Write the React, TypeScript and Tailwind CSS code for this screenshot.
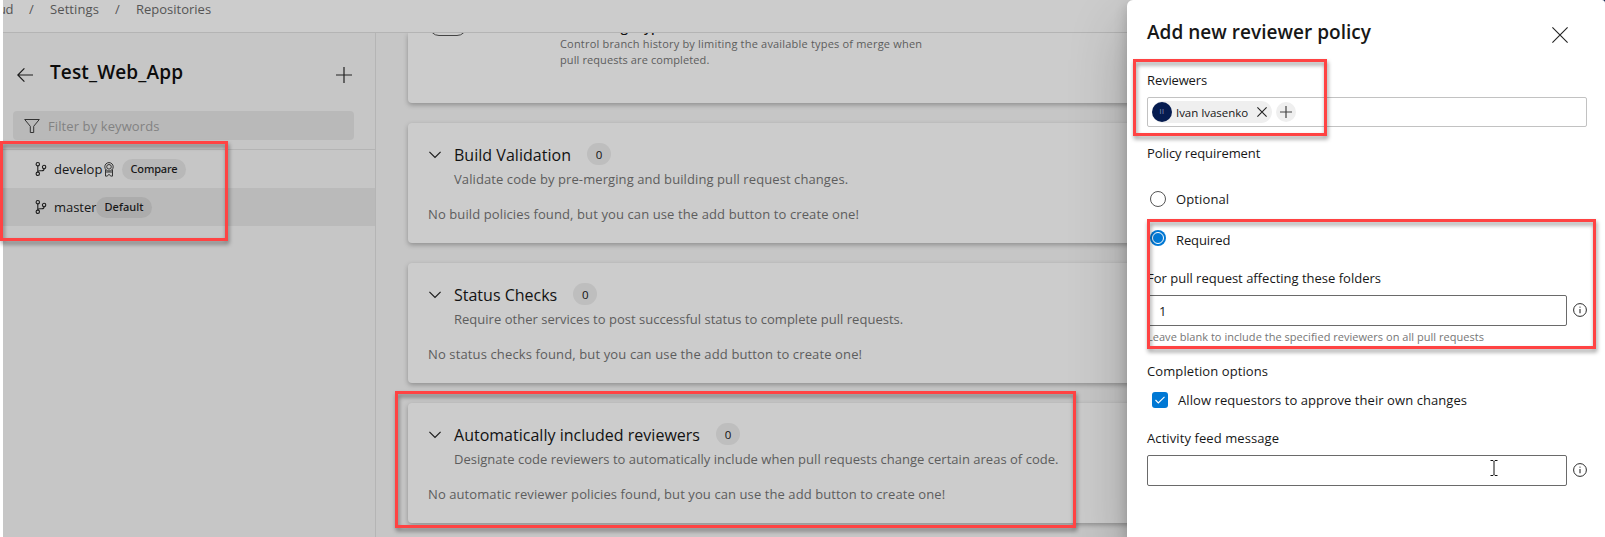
import type { ReactNode } from "react";

function BranchIcon() {
  return (
    <svg width="12" height="16" viewBox="0 0 12 16" fill="none" stroke="#1c1c1c" strokeWidth="1.1" className="shrink-0">
      <circle cx="2.8" cy="3.2" r="1.7" />
      <circle cx="2.8" cy="12.8" r="1.7" />
      <circle cx="9.1" cy="6" r="1.7" />
      <path d="M2.8 4.9v6.2M9.1 7.7c0 1.5-.8 2-2.2 2H4.8c-1.2 0-2 .5-2 1.4" />
    </svg>
  );
}

function RibbonIcon() {
  return (
    <svg width="10" height="15" viewBox="0 0 10 15" fill="none" stroke="#333" strokeWidth="1" className="shrink-0">
      <circle cx="5" cy="4.8" r="4.2" />
      <circle cx="5" cy="4.8" r="2.3" />
      <path d="M1.5 7.5v6.6h1.6L5 12.4l1.9 1.7h1.6V7.5M1.5 10h7" />
    </svg>
  );
}

function PlusIcon({ size, color }: { size: number; color: string }) {
  return (
    <svg width={size} height={size} viewBox={`0 0 ${size} ${size}`} stroke={color} strokeWidth="1.2" className="shrink-0">
      <path d={`M0 ${size / 2}H${size}M${size / 2} 0V${size}`} />
    </svg>
  );
}

function CrossIcon({ size }: { size: number }) {
  return (
    <svg width={size} height={size} viewBox={`0 0 ${size} ${size}`} stroke="#222" strokeWidth="1.1" className="shrink-0">
      <path d={`M.4 .4L${size - 0.4} ${size - 0.4}M${size - 0.4} .4L.4 ${size - 0.4}`} />
    </svg>
  );
}

function InfoIcon() {
  return (
    <svg width="14" height="14" viewBox="0 0 14 14" fill="none" stroke="#2b2b2b" className="shrink-0">
      <circle cx="7" cy="7" r="6.4" strokeWidth="1" />
      <path d="M7 6v4.3" strokeWidth="1.1" />
      <circle cx="7" cy="4.1" r=".7" fill="#2b2b2b" stroke="none" />
    </svg>
  );
}

type PolicyCardProps = {
  title: string;
  titleClass: string;
  description: string;
  descriptionClass: string;
  empty: string;
  emptyClass: string;
};

const policies: PolicyCardProps[] = [
  {
    title: "Build Validation",
    titleClass: "tracking-[0.03px]",
    description: "Validate code by pre-merging and building pull request changes.",
    descriptionClass: "tracking-[0.088px]",
    empty: "No build policies found, but you can use the add button to create one!",
    emptyClass: "tracking-[0.107px]",
  },
  {
    title: "Status Checks",
    titleClass: "tracking-[0px]",
    description: "Require other services to post successful status to complete pull requests.",
    descriptionClass: "tracking-[0.018px]",
    empty: "No status checks found, but you can use the add button to create one!",
    emptyClass: "tracking-[0.128px]",
  },
  {
    title: "Automatically included reviewers",
    titleClass: "tracking-[0.01px]",
    description: "Designate code reviewers to automatically include when pull requests change certain areas of code.",
    descriptionClass: "tracking-[0.02px]",
    empty: "No automatic reviewer policies found, but you can use the add button to create one!",
    emptyClass: "tracking-[0.088px]",
  },
];

function PolicyCard(p: PolicyCardProps) {
  return (
    <section className="h-[120px] shrink-0 rounded bg-[#cccccc] pl-5 pt-5 shadow-[0_2px_5px_rgba(0,0,0,0.28)]">
      <div className="flex h-6 items-center">
        <svg width="12" height="8" viewBox="0 0 12 8" fill="none" stroke="#1c1c1c" strokeWidth="1.2" className="ml-px mr-[13px] shrink-0">
          <path d="M.4 .9L6 6.5 11.6 .9" />
        </svg>
        <h2 className={`text-[16px] leading-6 text-[#121212] ${p.titleClass}`}>{p.title}</h2>
        <span className="-mt-0.5 ml-4 flex h-[22px] w-6 items-center justify-center rounded-full bg-[#bebebe] pt-px text-[11.5px] text-[#111]">0</span>
      </div>
      <p className={`ml-[26px] mt-0.5 text-[13px] leading-5 text-[#5d5d5d] ${p.descriptionClass}`}>{p.description}</p>
      <p className={`mt-[15px] text-[13px] leading-5 text-[#5d5d5d] ${p.emptyClass}`}>{p.empty}</p>
    </section>
  );
}

function TextField({ value, children }: { value?: string; children?: ReactNode }) {
  return (
    <div className="mt-[7px] flex items-center">
      <div className="flex h-[31px] w-[420px] items-center rounded-[2px] border border-[#6a6a6a] pl-[11px] pt-px text-[13px]">
        {value}
        {children}
      </div>
      <span className="-mt-0.5 ml-1.5">
        <InfoIcon />
      </span>
    </div>
  );
}

const frame = "pointer-events-none absolute border-[3px] border-[#ff4343] drop-shadow-[1px_3px_2px_rgba(0,0,0,0.42)]";

export default function App() {
  return (
    <div className="relative h-[537px] w-[1605px] overflow-hidden whitespace-nowrap bg-white pl-[3px] font-['Open_Sans','Noto_Sans',sans-serif]">
      <div className="flex h-full flex-col bg-[#c6c6c6]">
        <header className="h-[33px] shrink-0 border-b border-[#b4b4b4] bg-[#cccccc]">
          <nav className="flex h-[18px] items-center text-[13px] leading-5 text-[#555]">
            <span className="flex w-[10px] justify-end overflow-hidden tracking-[-0.5px]">ud</span>
            <span className="w-[37px] pl-4">/</span>
            <span className="w-[65px] tracking-[0.1px]">Settings</span>
            <span className="w-[21px]">/</span>
            <span>Repositories</span>
          </nav>
        </header>

        <div className="flex min-h-0 flex-1">
          <aside className="w-[373px] shrink-0 border-r border-[#b5b5b5]">
            <div className="flex h-[53px] items-start pl-[14px] pt-[25px]">
              <svg width="16" height="14" viewBox="0 0 16 14" fill="none" stroke="#1c1c1c" strokeWidth="1.2" className="mt-[10px]">
                <path d="M16 7H.8M7.4 .4L.8 7l6.6 6.6" />
              </svg>
              <h1 className="ml-[17px] text-[19px] font-semibold leading-7 tracking-[0.13px] text-[#0c0c0c]">Test_Web_App</h1>
              <span className="ml-auto mr-[23px] mt-[9px]">
                <PlusIcon size={16} color="#222" />
              </span>
            </div>
            <div className="ml-[10px] mt-[25px] flex h-[29px] w-[341px] items-center rounded-sm bg-[#b9b9b9] pl-[11px]">
              <svg width="16" height="14" viewBox="0 0 16 14" fill="none" stroke="#333" strokeWidth="1">
                <path d="M.7 .5h14.6L9.7 7.3v6.2H6.3V7.3z" />
              </svg>
              <span className="ml-2 text-[13px] leading-5 tracking-[0.1px] text-[#828282]">Filter by keywords</span>
            </div>
            <div className="mt-[9px] border-t border-[#b4b4b4]">
              <div className="flex h-[38px] items-center pl-[32px] text-[13px] text-[#171717]">
                <BranchIcon />
                <span className="ml-[7px] w-[50px] pt-0.5 tracking-[0.05px]">develop</span>
                <RibbonIcon />
                <span className="ml-2 flex h-[21px] w-16 items-center justify-center rounded-full bg-[#b8b8b8] pt-px font-['Noto_Sans'] text-[11px] font-medium tracking-[-0.14px]">Compare</span>
              </div>
              <div className="flex h-[38px] items-center bg-[#bababa] pl-[32px] text-[13px] text-[#171717]">
                <BranchIcon />
                <span className="ml-[7px] w-[42px] pt-0.5 tracking-[-0.05px]">master</span>
                <span className="flex h-[21px] w-14 items-center justify-center rounded-full bg-[#acacac] pt-px font-['Noto_Sans'] text-[11px] font-medium tracking-[0.049px]">Default</span>
              </div>
            </div>
          </aside>

          <main className="flex min-w-0 flex-1 flex-col gap-5 overflow-hidden pl-8">
            <section className="flex h-[70px] shrink-0 rounded-b bg-[#cccccc] pl-[21px] shadow-[0_2px_5px_rgba(0,0,0,0.28)]">
              <span className="-mt-[17px] h-5 w-[38px] shrink-0 rounded-full border border-[#444]" />
              <div className="ml-[93px]">
                <h3 className="-mt-4 h-[19px] text-[13px] font-semibold leading-5 text-[#121212]">Limit merge types</h3>
                <p className="text-[11px] leading-4 tracking-[0.19px] text-[#5d5d5d]">Control branch history by limiting the available types of merge when</p>
                <p className="text-[11px] leading-4 tracking-[0.1px] text-[#5d5d5d]">pull requests are completed.</p>
              </div>
            </section>
            {policies.map((p) => (
              <PolicyCard key={p.title} {...p} />
            ))}
          </main>
        </div>
      </div>

      <div className="absolute right-0 top-0 h-2 w-2 bg-[#0a1c4a]" />
      <div className="absolute right-0 top-0 h-full w-[478px] rounded-tl-md rounded-tr-[3px] bg-white pl-5 pt-[18px] text-[13px] leading-5 text-[#171717] shadow-[0_26px_58px_rgba(0,0,0,0.24),0_5px_14px_rgba(0,0,0,0.2)]">
        <div className="flex h-7 items-center">
          <h2 className="text-[19px] font-semibold leading-7 tracking-[0.03px]">Add new reviewer policy</h2>
          <span className="ml-auto mr-[37px] mt-1.5">
            <CrossIcon size={16} />
          </span>
        </div>

        <p className="mt-6 tracking-[-0.143px]">Reviewers</p>
        <div className="mt-[7px] flex h-[30px] w-[440px] items-center rounded-[2px] border border-[#c2c2c2] pl-1">
          <div className="flex h-[22px] w-[120px] items-center rounded-full bg-[#efefef]">
            <span className="flex size-5 items-center justify-center rounded-full bg-[#061c50] text-[7px] tracking-[0.5px] text-[#9aa5c4]">II</span>
            <span className="ml-1 w-[81px] pt-0.5 text-[11.5px] tracking-[-0.05px]">Ivan Ivasenko</span>
            <CrossIcon size={10} />
          </div>
          <span className="ml-1 flex size-5 items-center justify-center rounded-full bg-[#efefef]">
            <PlusIcon size={12} color="#444" />
          </span>
        </div>

        <p className="mt-4 tracking-[-0.08px]">Policy requirement</p>
        <div className="mt-[26px] flex items-center pl-[3px]">
          <span className="size-4 rounded-full border border-[#555]" />
          <span className="ml-[10px] tracking-[0.12px]">Optional</span>
        </div>
        <div className="mt-[21px] flex items-start pl-[3px]">
          <span className="flex size-4 items-center justify-center rounded-full bg-[#0078d4]">
            <span className="size-3 rounded-full border border-white bg-[#0078d4]" />
          </span>
          <span className="ml-[10px] tracking-[-0.1px]">Required</span>
        </div>

        <p className="mt-[18px]">For pull request affecting these folders</p>
        <TextField value="1" />
        <p className="mt-[3px] text-[11px] leading-4 tracking-[0.03px] text-[#767676]">Leave blank to include the specified reviewers on all pull requests</p>

        <p className="mt-4 tracking-[0.1px]">Completion options</p>
        <div className="mt-[9px] flex items-center pl-[5px]">
          <span className="flex size-4 items-center justify-center rounded-[3px] bg-[#0078d4]">
            <svg width="10" height="8" viewBox="0 0 10 8" fill="none" stroke="white" strokeWidth="1.1">
              <path d="M.5 4l2.8 2.9L9.5 .8" />
            </svg>
          </span>
          <span className="ml-[10px] tracking-[0.075px]">Allow requestors to approve their own changes</span>
        </div>

        <p className="mt-[18px] tracking-[0.09px]">Activity feed message</p>
        <TextField>
          <svg width="8" height="16" viewBox="0 0 8 16" fill="none" stroke="#111" strokeWidth="1" className="-mt-1.5 ml-[331px]">
            <path d="M.5 .5h2.5L4 1.5 5 .5h2.5M4 1.5v13M.5 15.5h2.5l1-1 1 1h2.5" />
          </svg>
        </TextField>
      </div>

      <div className={`${frame} left-0 top-[141px] h-[100px] w-[228px]`} />
      <div className={`${frame} left-[395px] top-[391px] h-[137px] w-[681px]`} />
      <div className={`${frame} left-[1133px] top-[59px] h-[77px] w-[194px]`} />
      <div className={`${frame} left-[1147px] top-[219px] h-[130px] w-[449px]`} />
    </div>
  );
}
